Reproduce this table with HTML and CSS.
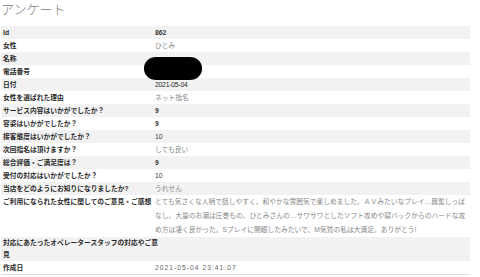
FILE: index.html
```html
<!DOCTYPE html>
<html lang="ja">
<head>
<meta charset="utf-8">
<title>アンケート</title>
<link rel="stylesheet" href="styles.css">
</head>
<body>
<h1 class="title">アンケート</h1>
<div class="sheet">
  <table class="survey">
    <colgroup><col class="col-label"><col class="col-value"></colgroup>
    <tbody>
      <tr><th>Id</th><td class="num b">862</td></tr>
      <tr><th>女性</th><td class="txt">ひとみ</td></tr>
      <tr><th>名称</th><td></td></tr>
      <tr><th>電話番号</th><td></td></tr>
      <tr><th>日付</th><td class="num date1">2021-05-04</td></tr>
      <tr><th>女性を選ばれた理由</th><td class="txt">ネット指名</td></tr>
      <tr><th>サービス内容はいかがでしたか？</th><td class="num b">9</td></tr>
      <tr><th>容姿はいかがでしたか？</th><td class="num b">9</td></tr>
      <tr><th>接客態度はいかがでしたか？</th><td class="num">10</td></tr>
      <tr><th>次回指名は頂けますか？</th><td class="txt">しても良い</td></tr>
      <tr><th>総合評価・ご満足度は？</th><td class="num b">9</td></tr>
      <tr><th>受付の対応はいかがでしたか？</th><td class="num">10</td></tr>
      <tr><th>当店をどのようにお知りになりましたか?</th><td class="txt">うれせん</td></tr>
      <tr class="tall"><th>ご利用になられた女性に関してのご意見・ご感想</th><td class="txt">とても気さくな人柄で話しやすく、和やかな雰囲気で楽しめました。ＡＶみたいなプレイ…興奮しっぱなし。大量のお潮は圧巻もの。ひとみさんの…サワサワとしたソフト攻めや寝バックからのハードな攻め方は凄く良かった。Sプレイに開眼したみたいで、M気質の私は大満足。ありがとう!</td></tr>
      <tr class="wrap2"><th>対応にあたったオペレータースタッフの対応やご意<br>見</th><td></td></tr>
      <tr class="last"><th>作成日</th><td class="num date2">2021-05-04 23:41:07</td></tr>
    </tbody>
  </table>
  <div class="redact"></div>
</div>
</body>
</html>
```
FILE: styles.css
```css
html, body {
  margin: 0;
  padding: 0;
  background: #fff;
}
body {
  font-family: "Liberation Sans", "Noto Sans CJK JP", sans-serif;
  color: #333;
}
.title {
  margin: 0 0 8px 0;
  padding-left: 1px;
  font-family: "Noto Sans CJK JP", sans-serif;
  font-weight: 300;
  font-size: 13px;
  line-height: 18px;
  color: #808080;
}
.sheet {
  position: relative;
  margin-left: 1px;
  width: 469px;
}
.survey {
  width: 469px;
  border-collapse: collapse;
  table-layout: fixed;
  font-size: 6.75px;
  line-height: 13px;
}
.col-label { width: 153px; }
.survey th,
.survey td {
  padding: 0;
  vertical-align: top;
}
.survey th {
  padding-left: 2px;
  text-align: left;
  font-weight: bold;
  color: #2a2a2a;
  white-space: nowrap;
}
.survey td {
  padding-left: 1px;
  color: #555;
}
.survey tr:nth-child(odd) {
  background: #f2f2f2;
}
.survey .num { color: #333; }
.survey .b { font-weight: bold; }
.survey .txt { color: #888; }
.survey .date1 { letter-spacing: -0.2px; color: #222; }
.survey .date2 { letter-spacing: 1px; color: #666; }
.survey tr.tall { line-height: 14px; }
.survey tr.wrap2 { line-height: 12px; }
.survey tr.last { border-bottom: 1px solid #dedede; }
.redact {
  position: absolute;
  left: 143px;
  top: 31px;
  width: 58px;
  height: 23px;
  background: #000;
  border-radius: 12px / 11px;
}
```
